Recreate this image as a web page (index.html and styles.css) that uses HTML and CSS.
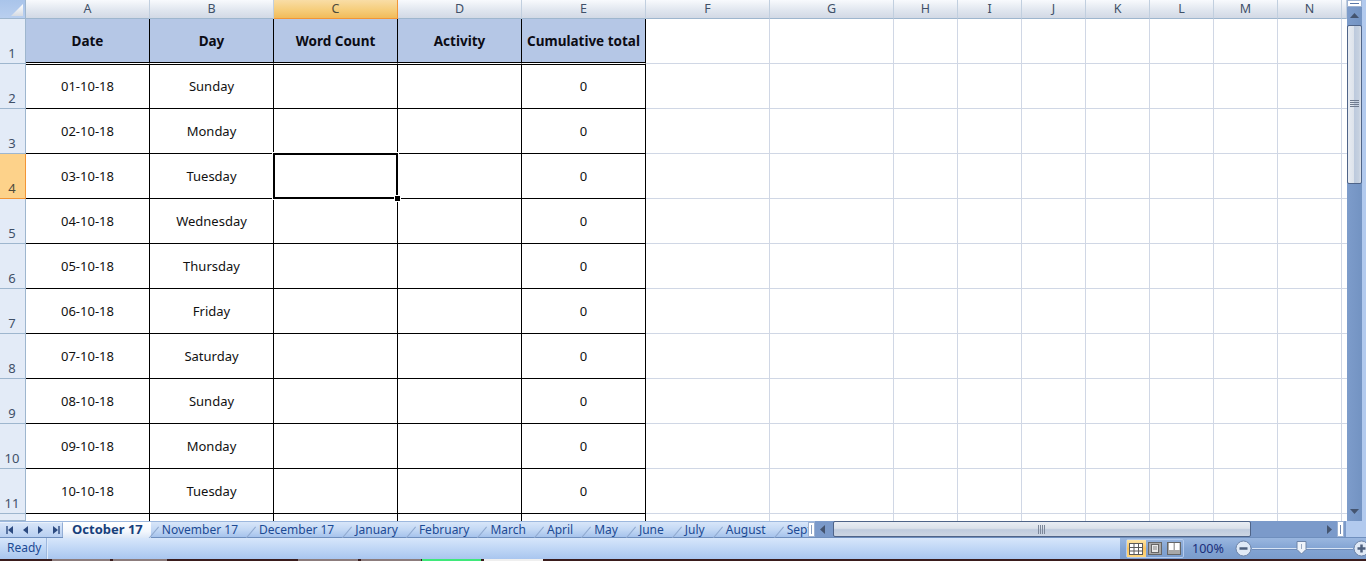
FILE: index.html
```html
<!DOCTYPE html>
<html lang="en">
<head>
<meta charset="utf-8">
<title>Word count tracker</title>
<link rel="stylesheet" href="styles.css">
</head>
<body>
<div class="app">
  <div class="main">
    <div class="sheet">
      <div class="corner"><span class="corner-tri"></span></div>
      <div class="ch">A</div><div class="ch">B</div><div class="ch ch-on">C</div><div class="ch">D</div><div class="ch">E</div><div class="ch">F</div><div class="ch">G</div>
      <div class="ch">H</div><div class="ch">I</div><div class="ch">J</div><div class="ch">K</div><div class="ch">L</div><div class="ch">M</div><div class="ch">N</div><div class="ch"></div>

      <div class="fill-wide"></div>
      <div class="fill-narrow"></div>

      <div class="rh">1</div>
      <div class="c head">Date</div><div class="c head">Day</div><div class="c head">Word Count</div><div class="c head">Activity</div><div class="c head">Cumulative total</div>

      <div class="rh">2</div>
      <div class="c first">01-10-18</div><div class="c first">Sunday</div><div class="c first"></div><div class="c first"></div><div class="c first">0</div>
      <div class="rh">3</div>
      <div class="c">02-10-18</div><div class="c">Monday</div><div class="c"></div><div class="c"></div><div class="c">0</div>
      <div class="rh rh-on">4</div>
      <div class="c">03-10-18</div><div class="c">Tuesday</div><div class="c active"><span class="sel"><span class="sel-handle"></span></span></div><div class="c"></div><div class="c">0</div>
      <div class="rh">5</div>
      <div class="c">04-10-18</div><div class="c">Wednesday</div><div class="c"></div><div class="c"></div><div class="c">0</div>
      <div class="rh">6</div>
      <div class="c">05-10-18</div><div class="c">Thursday</div><div class="c"></div><div class="c"></div><div class="c">0</div>
      <div class="rh">7</div>
      <div class="c">06-10-18</div><div class="c">Friday</div><div class="c"></div><div class="c"></div><div class="c">0</div>
      <div class="rh">8</div>
      <div class="c">07-10-18</div><div class="c">Saturday</div><div class="c"></div><div class="c"></div><div class="c">0</div>
      <div class="rh">9</div>
      <div class="c">08-10-18</div><div class="c">Sunday</div><div class="c"></div><div class="c"></div><div class="c">0</div>
      <div class="rh">10</div>
      <div class="c">09-10-18</div><div class="c">Monday</div><div class="c"></div><div class="c"></div><div class="c">0</div>
      <div class="rh">11</div>
      <div class="c">10-10-18</div><div class="c">Tuesday</div><div class="c"></div><div class="c"></div><div class="c">0</div>
      <div class="rh"></div>
      <div class="c clip"></div><div class="c clip"></div><div class="c clip"></div><div class="c clip"></div><div class="c clip"></div>
    </div>

    <div class="vscroll">
      <div class="split-v"><span></span></div>
      <svg class="arrow-up" width="9" height="5" viewBox="0 0 9 5"><path d="M4.5 0 9 5H0z" fill="#44546f"/></svg>
      <div class="thumb-v">
        <svg width="9" height="8" viewBox="0 0 9 8"><path d="M0 .5h9M0 2.5h9M0 4.5h9M0 6.5h9" stroke="#6f7b8e" stroke-width="1"/></svg>
      </div>
      <svg class="arrow-down" width="9" height="5" viewBox="0 0 9 5"><path d="M0 0h9L4.5 5z" fill="#44546f"/></svg>
    </div>
    <div class="frame-r"></div>
  </div>

  <div class="tabbar">
    <div class="tabnav">
      <svg width="7" height="8" viewBox="0 0 7 8"><path d="M1 0v8" stroke="#2c4a80" stroke-width="1.4"/><path d="M7 0v8L2 4z" fill="#2c4a80"/></svg>
      <svg width="5" height="8" viewBox="0 0 5 8"><path d="M5 0v8L0 4z" fill="#2c4a80"/></svg>
      <svg width="5" height="8" viewBox="0 0 5 8"><path d="M0 0v8l5-4z" fill="#2c4a80"/></svg>
      <svg width="7" height="8" viewBox="0 0 7 8"><path d="M0 0v8l5-4z" fill="#2c4a80"/><path d="M6 0v8" stroke="#2c4a80" stroke-width="1.4"/></svg>
    </div>
    <div class="tabs">
      <div class="tab tab-on">October 17</div>
      <div class="tab">November 17</div>
      <div class="tab">December 17</div>
      <div class="tab">January</div>
      <div class="tab">February</div>
      <div class="tab">March</div>
      <div class="tab">April</div>
      <div class="tab">May</div>
      <div class="tab">June</div>
      <div class="tab">July</div>
      <div class="tab">August</div>
      <div class="tab">September</div>
    </div>
    <div class="split-h"><span></span></div>
    <div class="hscroll">
      <svg class="arrow-h" width="5" height="9" viewBox="0 0 5 9"><path d="M5 0v9L0 4.500z" fill="#44546f"/></svg>
      <div class="thumb-h">
        <svg width="8" height="9" viewBox="0 0 8 9"><path d="M.5 0v9M2.500 0v9M4.500 0v9M6.500 0v9" stroke="#7c8799" stroke-width="1"/></svg>
      </div>
      <svg class="arrow-h" width="5" height="9" viewBox="0 0 5 9"><path d="M0 0v9l5-4.500z" fill="#44546f"/></svg>
      <div class="split-h2"><span></span></div>
    </div>
    <div class="frame-corner"></div>
  </div>

  <div class="status">
    <div class="ready">Ready</div>
    <div class="status-mid"></div>
    <div class="status-right">
      <div class="views">
        <div class="view view-on">
          <svg width="14" height="12" viewBox="0 0 14 12"><rect x=".5" y=".5" width="13" height="11" fill="#fff" stroke="#5a5a5a"/><path d="M.5 4.500h13M.5 8h13M5 .5v11M9.500 .5v11" stroke="#5a5a5a"/></svg>
        </div>
        <div class="view">
          <svg width="14" height="13" viewBox="0 0 14 13"><rect x=".5" y=".5" width="13" height="12" fill="#a8a8a8" stroke="#666"/><rect x="3.500" y="2.500" width="7" height="8" fill="#e8e8e8" stroke="#666"/><path d="M5 5h4M5 7h4" stroke="#888"/></svg>
        </div>
        <div class="view">
          <svg width="14" height="13" viewBox="0 0 14 13"><rect x=".5" y=".5" width="13" height="12" fill="#a8a8a8" stroke="#666"/><rect x="2" y="1" width="4.500" height="7" fill="#fff"/><rect x="8" y="1" width="4.500" height="7" fill="#fff"/></svg>
        </div>
      </div>
      <div class="zoom-val">100%</div>
      <svg class="zoom-btn" width="17" height="17" viewBox="0 0 17 17"><circle cx="8.500" cy="8.500" r="7.500" fill="#dfe9f6" stroke="#6d84a8"/><path d="M4.500 8.500h8" stroke="#4d5f7d" stroke-width="2.500"/></svg>
      <div class="slider"><svg class="slider-thumb" width="11" height="14" viewBox="0 0 11 14"><path d="M1 .5h9v8L5.500 13 1 8.500z" fill="#eef3fa" stroke="#6d84a8"/><path d="M5.500 3v5" stroke="#9aaac2"/></svg></div>
      <svg class="zoom-btn" width="17" height="17" viewBox="0 0 17 17"><circle cx="8.500" cy="8.500" r="7.500" fill="#dfe9f6" stroke="#6d84a8"/><path d="M4.500 8.500h8M8.500 4.500v8" stroke="#4d5f7d" stroke-width="2.500"/></svg>
    </div>
  </div>

  <div class="strip">
    <span class="strip-a"></span><span class="strip-b"></span><span class="strip-c"></span><span class="strip-d"></span><span class="strip-green"></span><span class="strip-white"></span>
  </div>
</div>
</body>
</html>
```

FILE: styles.css
```css
* { box-sizing: border-box; }
html, body { margin: 0; padding: 0; height: 100%; overflow: hidden; }
body { font-family: "Noto Sans", "Open Sans", sans-serif; background: #3a1c1c; }
.app { width: 1366px; height: 561px; display: flex; flex-direction: column; overflow: hidden; }

.main { display: flex; height: 521px; flex: none; }
.sheet {
  width: 1347px; height: 521px; background: #fff; flex: none;
  display: grid;
  grid-template-columns: 26px repeat(7, 124px) repeat(7, 64px) 5px;
  grid-template-rows: 19px repeat(11, 45px) 7px;
  grid-auto-flow: row;
}
.corner { background: linear-gradient(#a9c4ea, #b9cfef); border-right: 1px solid #9eb6ce; border-bottom: 1px solid #9eb6ce; padding: 1px 2px 1px 1px; display: flex; align-items: flex-end; justify-content: flex-end; }
.corner-tri { width: 12px; height: 12px; background: linear-gradient(#ffffff, #d6dbe3); clip-path: polygon(100% 0, 100% 100%, 0 100%); margin: 0 0 1px 0; }
.ch {
  background: linear-gradient(#f8fafd, #dfe5ee 60%, #d2d9e5);
  border-right: 1px solid #c1cfdf; border-bottom: 1px solid #9eb6ce;
  display: flex; align-items: center; justify-content: center;
  font-size: 12.500px; color: #3f5068; padding-bottom: 1px;
}
.ch-on { background: linear-gradient(#f9dda6, #f6cf7f 50%, #f1bb5a); border-right-color: #f29536; border-bottom-color: #f29536; color: #4d4a3c; }
.rh {
  grid-column: 1;
  background: #e3ebf7; border-right: 1px solid #9eb6ce; border-bottom: 1px solid #9eb6ce;
  display: flex; align-items: flex-end; justify-content: center;
  font-size: 13px; line-height: 16px; color: #3f5068; padding-bottom: 2px; padding-right: 1px;
}
.rh-on { background: #fdd28a; border-right-color: #f29536; border-bottom-color: #f29536; color: #4d4a3c; }
.c {
  background: #fff; border-right: 1px solid #000; border-bottom: 1px solid #000;
  display: flex; align-items: center; justify-content: center;
  font-size: 13px; color: #111; position: relative; white-space: nowrap;
}
.head {
  background: #b5c7e6; font-weight: 700; font-size: 13.500px; color: #0c0c14;
  border-bottom: 1px solid #fff; box-shadow: inset 0 -1px 0 #000;
}
.first { border-top: 1px solid #000; padding-bottom: 1px; }
.clip { border-bottom: 0; }

.fill-wide {
  grid-column: 7 / span 2; grid-row: 2 / -1;
  background-image:
    repeating-linear-gradient(to bottom, transparent 0 44px, #d0d7e5 44px 45px),
    repeating-linear-gradient(to right, transparent 0 123px, #d0d7e5 123px 124px);
}
.fill-narrow {
  grid-column: 9 / -1; grid-row: 2 / -1;
  background-image:
    repeating-linear-gradient(to bottom, transparent 0 44px, #d0d7e5 44px 45px),
    repeating-linear-gradient(to right, transparent 0 63px, #d0d7e5 63px 64px);
}

.sel { position: absolute; left: -1px; top: -1px; right: -1px; bottom: -1px; border: 2px solid #000; box-shadow: 0 0 0 1px #fff; z-index: 2; }
.sel-handle { position: absolute; right: -5px; bottom: -5px; width: 7px; height: 7px; background: #000; border: 1px solid #fff; }

.vscroll { width: 15px; flex: none; position: relative; background: linear-gradient(to right, #7d9ccb, #7393c2); display: flex; flex-direction: column; align-items: center; }
.split-v { width: 100%; height: 7px; background: #fff; border: 1px solid #9eb3d3; display: flex; align-items: center; justify-content: center; flex: none; }
.split-v span { width: 9px; height: 1px; background: #5a78a8; }
.arrow-up { margin-top: 6px; flex: none; }
.thumb-v {
  width: 15px; height: 159px; margin-top: 7px; flex: none;
  background: linear-gradient(to right, #e8ecf2, #dde3eb 45%, #bdcadd 50%, #c6d1e0 85%, #dde2ea);
  border: 1px solid #4f6488; border-radius: 2px;
  display: flex; align-items: center; justify-content: center; padding-bottom: 2px;
}
.arrow-down { margin-top: auto; margin-bottom: 7px; flex: none; }
.frame-r { flex: 1; background: #b2caee; }

.tabbar { height: 17px; flex: none; display: flex; background: linear-gradient(#d8e6f9, #c3d8f4 50%, #a6c3ec); border-top: 1px solid #9db8de; border-bottom: 1px solid #6f8fbe; }
.tabnav { width: 63px; flex: none; display: flex; align-items: center; gap: 10px; padding-left: 6px; border-right: 1px solid #93aed6; border-top: 1px solid #e9f1fb; background: linear-gradient(#d7e5f8, #b9d0f1); }
.tabs { width: 745px; flex: none; overflow: hidden; display: flex; height: 16px; }
.tab {
  flex: none; position: relative; height: 16px; line-height: 15px;
  font-size: 12px; color: #1c4a94; padding: 0 10px 0 11px; white-space: nowrap;
}
.tab::after {
  content: ""; position: absolute; right: -3px; top: 3px; width: 1px; height: 16px;
  background: #8fa9cf; transform: rotate(40deg);
}
.tab-on {
  font-weight: 700; font-size: 13px; color: #173f7c; padding: 0 8px 0 9px;
  background: linear-gradient(#ffffff, #f3f7fd 60%, #dbe7f7);
}
.split-h { width: 7px; flex: none; background: #fff; border: 1px solid #9eb3d3; display: flex; align-items: center; justify-content: center; }
.split-h span { width: 1px; height: 9px; background: #8aa0c2; }
.hscroll { width: 531px; flex: none; margin-top: -1px; background: #7b9aca; display: flex; align-items: center; padding-left: 5px; }
.arrow-h { flex: none; }
.thumb-h {
  width: 418px; height: 16px; margin-left: 8px; margin-right: 76px; flex: none;
  background: linear-gradient(#e9edf3, #dbe1ea 45%, #bfcbdd 55%, #cdd6e3);
  border: 1px solid #4f6488; border-radius: 2px;
  display: flex; align-items: center; justify-content: center;
}
.arrow-h + .thumb-h + .arrow-h { margin-left: 0; }
.split-h2 { width: 7px; height: 16px; margin-left: 5px; flex: none; background: #fff; border: 1px solid #9eb3d3; display: flex; align-items: center; justify-content: center; }
.split-h2 span { width: 1px; height: 9px; background: #6f86ad; }
.frame-corner { flex: 1; background: #b2caee; margin-top: -1px; }

.status { height: 21px; flex: none; display: flex; background: linear-gradient(#d7e6fb, #c2d8f6 45%, #a9c6ef); font-size: 12px; color: #1c4a94; }
.ready { width: 47px; padding-left: 7px; line-height: 19px; border-right: 1px solid #9db8de; box-shadow: 1px 0 0 #dce9fb; flex: none; }
.status-mid { flex: 1; }
.status-right {
  width: 246px; flex: none; display: flex; align-items: center; padding-left: 6px;
  background: linear-gradient(#9ab7e0, #83a4d3 50%, #7a9ccc);
}
.views { display: flex; height: 19px; width: 58px; flex: none; border: 1px solid #b4cbee; border-radius: 2px; }
.view { flex: 1; display: flex; align-items: center; justify-content: center; }
.view-on { background: linear-gradient(#fde6a8, #fac45f 50%, #fdd77f); }
.zoom-val { width: 51px; flex: none; padding-left: 8px; font-size: 12.500px; color: #1b2f7a; }
.zoom-btn { flex: none; }
.slider { width: 101px; height: 1px; flex: none; background: #d8e4f5; box-shadow: 0 1px 0 #6f8dbb; position: relative; }
.slider-thumb { position: absolute; left: 44px; top: -7px; }

.strip { height: 2px; flex: 1; display: flex; background: #3a1c1c; }
.strip span { display: block; height: 100%; }
.strip-a { width: 58px; margin-left: 52px; background: #8c7c7c; }
.strip-b { width: 54px; margin-left: 3px; background: #8c7c7c; }
.strip-c { width: 60px; margin-left: 131px; background: #8c7c7c; }
.strip-d { width: 60px; margin-left: 3px; background: #8c7c7c; }
.strip-green { width: 59px; margin-left: 1px; background: #3fe87a; }
.strip-white { width: 59px; margin-left: 3px; background: #efefef; }
```
